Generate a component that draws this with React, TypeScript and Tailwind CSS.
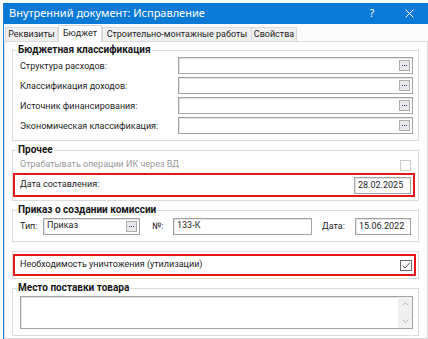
import React from "react";

function Dots() {
  return (
    <span className="w-[11px] h-[11px] border border-[#adadad] bg-[#e9e9e9] flex items-center justify-center gap-[1px]">
      <span className="w-[1px] h-[1px] bg-[#303a8a]" />
      <span className="w-[1px] h-[1px] bg-[#303a8a]" />
      <span className="w-[1px] h-[1px] bg-[#303a8a]" />
    </span>
  );
}

function Input({ className, value, btn, top }: { className: string; value?: string; btn?: boolean; top?: boolean }) {
  return (
    <div
      className={
        "h-[17px] border border-[#a3a3a3] bg-white flex pl-[3px] pr-[2px] shadow-[inset_1px_1px_0_#e3e3e3] " +
        (top ? "items-start " : "items-center ") +
        className
      }
    >
      <span className="flex-1 text-[#1e1e1e] leading-[13px] whitespace-nowrap">{value}</span>
      {btn ? <span className="self-center"><Dots /></span> : null}
    </div>
  );
}

function Title({ children }: { children: React.ReactNode }) {
  return (
    <div className="-mt-[8px] -ml-[3px] h-[14px] leading-[14px] w-fit px-[1px] bg-white font-bold text-[10px] text-[#161616]">
      {children}
    </div>
  );
}

export default function App() {
  return (
    <div className="w-[428px] h-[339px] bg-white overflow-hidden pl-[3px] pt-[3px] font-['Roboto',sans-serif] text-[9px] text-[#1e1e1e]">
      <div className="h-full flex flex-col border-l border-[#2b7bd0]">
        <div className="h-[21px] shrink-0 bg-[#0b79d6] text-white flex items-center pl-[5px] text-[11px] font-['Noto_Sans',sans-serif]">
          <span className="flex-1">Внутренний документ: Исправление</span>
          <span className="w-[10px] text-center mr-[28px]">?</span>
          <svg width="9" height="9" viewBox="0 0 9 9" className="mr-[14px]">
            <path d="M0.5 0.5L8.5 8.5M8.5 0.5L0.5 8.5" stroke="white" strokeWidth="1" />
          </svg>
        </div>
        <div className="h-[17px] shrink-0 flex items-end pl-[1px] bg-[#fbfbfb] whitespace-nowrap">
          <div className="w-[53px] h-[14px] flex items-center justify-center border border-b-0 border-[#d9d9d9] bg-[#f0f0f0]">Реквизиты</div>
          <div className="w-[44px] h-[17px] -mb-px relative z-10 flex items-center justify-center border border-b-0 border-[#d9d9d9] bg-white">Бюджет</div>
          <div className="w-[150px] h-[14px] flex items-center justify-center border border-b-0 border-[#d9d9d9] bg-[#f0f0f0]">Строительно-монтажные работы</div>
          <div className="w-[46px] h-[14px] -ml-px flex items-center justify-center border border-b-0 border-[#d9d9d9] bg-[#f0f0f0]">Свойства</div>
        </div>
        <div className="flex-1 border border-[#dadada] bg-white pl-[7px] pr-[8px] pt-[8px]">
          {/* G1 */}
          <div className="border border-[#dcdcdc] pl-[7px] pr-[5px] pb-[6px]">
            <Title>Бюджетная классификация</Title>
            <div className="flex flex-col gap-[3px]">
              <div className="flex items-center h-[17px]">
                <span className="flex-1 mt-[3px]">Структура расходов:</span>
                <Input className="w-[235px]" btn />
              </div>
              <div className="flex items-center h-[17px]">
                <span className="flex-1 mt-[3px]">Классификация доходов:</span>
                <Input className="w-[235px]" btn />
              </div>
              <div className="flex items-center h-[17px]">
                <span className="flex-1 mt-[3px]">Источник финансирования:</span>
                <Input className="w-[235px]" btn />
              </div>
              <div className="flex items-center h-[17px]">
                <span className="flex-1 mt-[3px]">Экономическая классификация:</span>
                <Input className="w-[235px]" btn />
              </div>
            </div>
          </div>
          {/* G2 */}
          <div className="mt-[9px] border border-[#dcdcdc] pr-[3px] pb-[3px]">
            <div className="pl-[7px]">
              <Title>Прочее</Title>
            </div>
            <div className="h-[16px] flex items-center pl-[7px] pr-[4px]">
              <span className="flex-1 text-[#9a9a9a]">Отрабатывать операции ИК через ВД</span>
              <span className="w-[11px] h-[11px] border border-[#cccccc] bg-white" />
            </div>
            <div className="h-[24px] border-2 border-[#e8151d] flex items-center pl-[5px] pr-[2px]">
              <span className="flex-1">Дата составления:</span>
              <Input className="w-[57px]" value="28.02.2025" />
            </div>
          </div>
          {/* G3 */}
          <div className="mt-[9px] border border-[#dcdcdc] pl-[7px] pr-[5px] pb-[6px]">
            <Title>Приказ о создании комиссии</Title>
            <div className="mt-[1px] h-[17px] flex items-center">
              <span className="w-[23px] mt-[1px]">Тип:</span>
              <Input className="w-[97px]" value="Приказ" btn top />
              <span className="ml-[12px] w-[21px] mt-[1px]">№:</span>
              <Input className="w-[139px]" value="133-К" top />
              <span className="ml-[10px] w-[33px] mt-[1px]">Дата:</span>
              <Input className="w-[56px]" value="15.06.2022" />
            </div>
          </div>
          {/* G4 */}
          <div className="mt-[9px] border border-[#dcdcdc] pt-[2px] pr-[2px] pb-[2px]">
            <div className="h-[22px] border-2 border-[#e8151d] flex items-center pl-[5px] pr-[2px]">
              <span className="flex-1">Необходимость уничтожения (утилизации)</span>
              <span className="w-[12px] h-[11px] border border-[#6b6b6b] bg-white flex items-center justify-center">
                <svg width="10" height="9" viewBox="0 0 10 9">
                  <path d="M1.5 4.5L4 7L9 1.5" stroke="#555" strokeWidth="1" fill="none" />
                </svg>
              </span>
            </div>
          </div>
          {/* G5 */}
          <div className="mt-[9px] border border-[#dcdcdc] pl-[7px] pr-[5px] pb-[6px]">
            <Title>Место поставки товара</Title>
            <div className="mt-[1px] h-[33px] border border-[#a3a3a3] bg-white flex justify-end shadow-[inset_1px_1px_0_#e3e3e3]">
              <div className="w-[14px] bg-[#f0f0f0] flex flex-col items-center justify-between py-[5px]">
                <svg width="7" height="4" viewBox="0 0 7 4">
                  <path d="M0.5 3.5L3.5 0.5L6.5 3.5" stroke="#b8b8b8" fill="none" />
                </svg>
                <svg width="7" height="4" viewBox="0 0 7 4">
                  <path d="M0.5 0.5L3.5 3.5L6.5 0.5" stroke="#b8b8b8" fill="none" />
                </svg>
              </div>
            </div>
          </div>
        </div>
      </div>
    </div>
  );
}
